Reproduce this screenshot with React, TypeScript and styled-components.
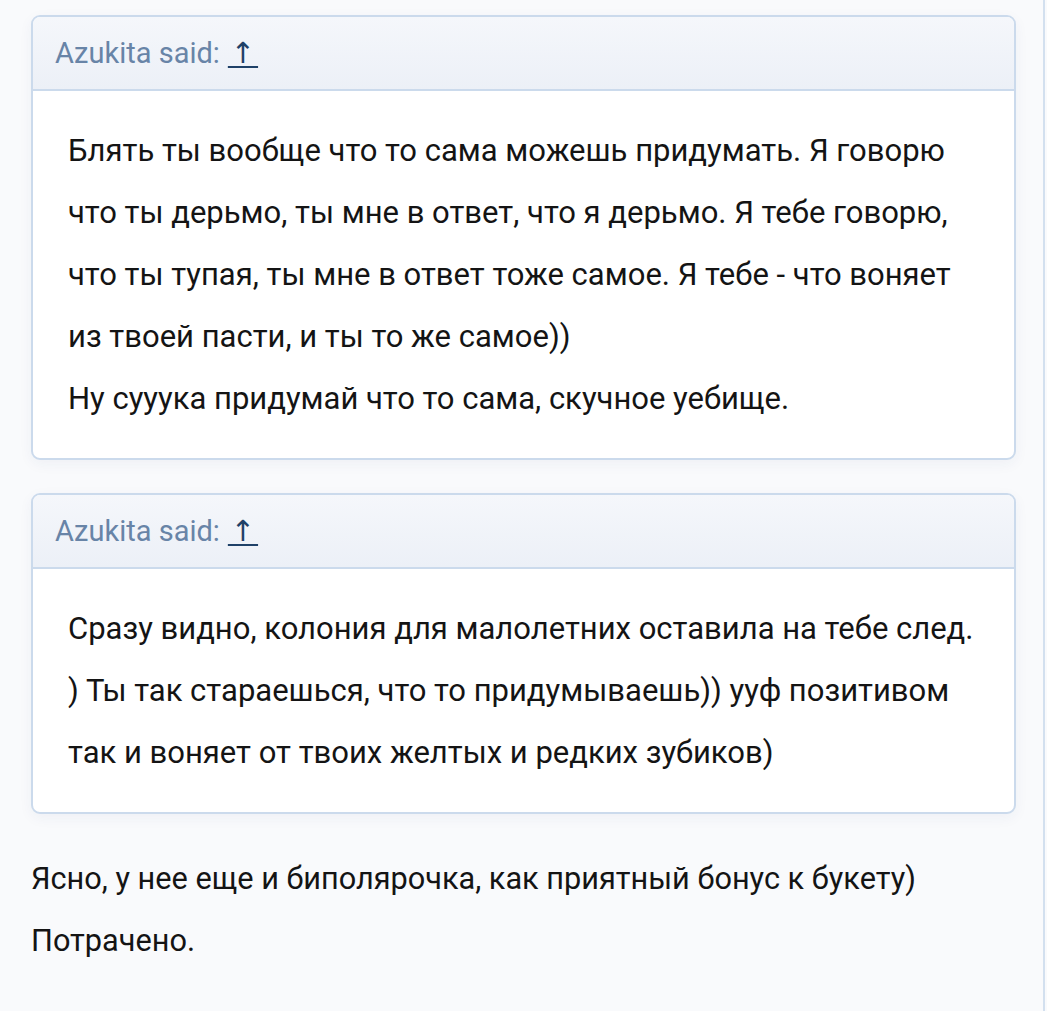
import React from "react";
import styled, { createGlobalStyle } from "styled-components";

const Global = createGlobalStyle`
  html, body { margin: 0; padding: 0; background: #f9fafc; }
  body { font-family: Roboto, "Noto Sans", "Liberation Sans", sans-serif; }
`;

const Page = styled.div`
  width: 1045px;
  min-height: 1011px;
  box-sizing: border-box;
  padding: 15px 27px 0 31px;
  border-right: 2px solid #d3e0ef;
  background: #f9fafc;
  display: flex;
  flex-direction: column;
  gap: 33px;
`;

const Quote = styled.blockquote`
  margin: 0;
  border: 2px solid #cbdaec;
  border-radius: 9px;
  background: #fff;
  box-shadow: 0 4px 14px rgba(30, 60, 110, 0.05);
  overflow: hidden;
`;

const QuoteHeader = styled.div`
  height: 74px;
  box-sizing: border-box;
  display: flex;
  align-items: center;
  gap: 8px;
  padding: 0 22px;
  background: linear-gradient(#f5f7fb, #ecf0f7);
  border-bottom: 2px solid #cbdaec;
  font-size: 29px;
  color: #6884a7;
`;

const JumpLink = styled.a`
  color: #1f4168;
  text-decoration: underline;
  text-decoration-thickness: 2px;
  text-underline-offset: 3px;
  font-family: Roboto, "Noto Sans", "DejaVu Sans", sans-serif;
  font-size: 29px;
`;

const QuoteBody = styled.div`
  padding: 29px 35px 28px;
  font-size: 31px;
  line-height: 62px;
  color: #141414;
`;

const Message = styled.div`
  padding-top: 1px;
  font-size: 30.7px;
  line-height: 62px;
  color: #141414;
`;

const quotes = [
  [
    "Блять ты вообще что то сама можешь придумать. Я говорю что ты дерьмо, ты мне в ответ, что я дерьмо. Я тебе говорю, что ты тупая, ты мне в ответ тоже самое. Я тебе - что воняет из твоей пасти, и ты то же самое))",
    "Ну сууука придумай что то сама, скучное уебище.",
  ],
  [
    "Сразу видно, колония для малолетних оставила на тебе след. ) Ты так стараешься, что то придумываешь)) ууф позитивом так и воняет от твоих желтых и редких зубиков)",
  ],
];

export default function App() {
  return (
    <>
      <Global />
      <Page>
        {quotes.map((lines, i) => (
          <Quote key={i}>
            <QuoteHeader>
              <span>Azukita said:</span>
              <JumpLink href="#">{"\u200a↑\u200a"}</JumpLink>
            </QuoteHeader>
            <QuoteBody>
              {lines.map((l, j) => (
                <React.Fragment key={j}>
                  {j > 0 && <br />}
                  {l}
                </React.Fragment>
              ))}
            </QuoteBody>
          </Quote>
        ))}
        <Message>
          Ясно, у нее еще и биполярочка, как приятный бонус к букету)
          <br />
          Потрачено.
        </Message>
      </Page>
    </>
  );
}
